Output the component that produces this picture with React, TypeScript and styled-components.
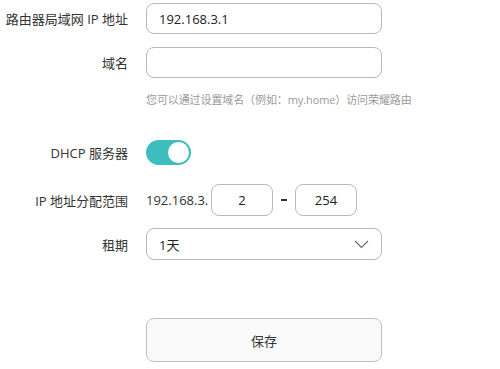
import styled, { createGlobalStyle } from 'styled-components';

/** global */
const GlobalStyle = createGlobalStyle`
	body {
		margin: 0;
		background: #ffffff;
		font-family: 'Open Sans', 'Noto Sans', 'Noto Sans CJK SC', sans-serif;
		color: #333333;
	}
`;

/** style */
const Form = styled.div`
	width: 500px;
	padding-top: 3px;
	display: flex;
	flex-direction: column;
`;

const Row = styled.div<{ $mt?: number; $h?: number }>`
	display: grid;
	grid-template-columns: 128px 236px;
	column-gap: 18px;
	align-items: center;
	margin-top: ${p => p.$mt ?? 0}px;
	height: ${p => p.$h ?? 31}px;
`;

const Label = styled.div`
	text-align: right;
	font-size: 13px;
	color: #333333;
	white-space: nowrap;
`;

const TextInput = styled.div`
	box-sizing: border-box;
	height: 100%;
	border: 1px solid #b8b8b8;
	border-radius: 8px;
	padding: 0 12px;
	display: flex;
	align-items: center;
	font-size: 13px;
	color: #222222;
`;

const Hint = styled.div`
	grid-column: 2;
	font-size: 11px;
	color: #9a9a9a;
	white-space: nowrap;
	letter-spacing: -0.1px;
`;

const Toggle = styled.div<{ $on: boolean }>`
	position: relative;
	width: 45px;
	height: 25px;
	border-radius: 13px;
	background: ${p => (p.$on ? '#3dbdbd' : '#cccccc')};

	&::after {
		content: '';
		position: absolute;
		top: 2px;
		left: ${p => (p.$on ? '22px' : '2px')};
		width: 21px;
		height: 21px;
		border-radius: 50%;
		background: #ffffff;
	}
`;

const Range = styled.div`
	display: flex;
	align-items: center;
	height: 100%;
	font-size: 13px;
`;

const Prefix = styled.span`
	width: 65px;
	white-space: nowrap;
`;

const SmallInput = styled.div`
	box-sizing: border-box;
	width: 62px;
	height: 100%;
	border: 1px solid #b8b8b8;
	border-radius: 8px;
	display: flex;
	align-items: center;
	justify-content: center;
	font-size: 13px;
	color: #222222;
`;

const Dash = styled.span`
	width: 22px;
	display: flex;
	justify-content: center;

	&::before {
		content: '';
		width: 6px;
		height: 2px;
		background: #333333;
	}
`;

const Select = styled(TextInput)`
	justify-content: space-between;
	padding-right: 12px;
`;

const SaveButton = styled.button`
	box-sizing: border-box;
	height: 44px;
	border: 1px solid #bdbdbd;
	border-radius: 8px;
	background: #fafafa;
	font-family: inherit;
	font-size: 13px;
	color: #333333;
`;

/** Component: DHCP 设置 */
const App: React.FC = () => {
	return (
		<>
			<GlobalStyle />
			<Form>
				<Row>
					<Label>路由器局域网 IP 地址</Label>
					<TextInput>192.168.3.1</TextInput>
				</Row>
				<Row $mt={13}>
					<Label>域名</Label>
					<TextInput />
				</Row>
				<Row $mt={10} $h={22}>
					<Hint>您可以通过设置域名（例如：my.home）访问荣耀路由</Hint>
				</Row>

				<Row $mt={30} $h={25}>
					<Label>DHCP 服务器</Label>
					<Toggle $on />
				</Row>
				<Row $mt={19} $h={32}>
					<Label>IP 地址分配范围</Label>
					<Range>
						<Prefix>192.168.3.</Prefix>
						<SmallInput>2</SmallInput>
						<Dash />
						<SmallInput>254</SmallInput>
					</Range>
				</Row>
				<Row $mt={12} $h={32}>
					<Label>租期</Label>
					<Select>
						<span>1天</span>
						<svg width='15' height='9' viewBox='0 0 15 9'>
							<path d='M1 1 L7.5 7.5 L14 1' fill='none' stroke='#666' strokeWidth='1.1' />
						</svg>
					</Select>
				</Row>
				<Row $mt={58} $h={44}>
					<span />
					<SaveButton>保存</SaveButton>
				</Row>
			</Form>
		</>
	);
};

export default App;
